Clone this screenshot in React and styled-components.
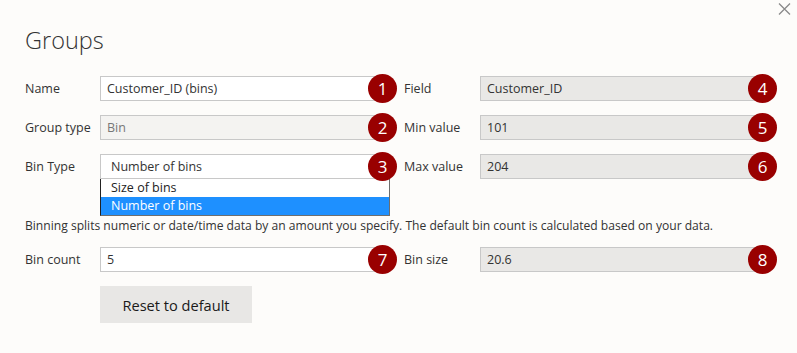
import React from "react";
import styled, { createGlobalStyle } from "styled-components";

const Global = createGlobalStyle`
  html, body { margin: 0; padding: 0; background: #fdfcfa; }
  * { box-sizing: border-box; }
`;

const Dialog = styled.div`
  position: relative;
  width: 797px;
  height: 353px;
  background: #fdfcfa;
  font-family: "Segoe UI", "Open Sans", "Noto Sans", sans-serif;
  color: #333;
  padding: 24px 0 0 25px;
`;

const Close = styled.button`
  position: absolute;
  top: 3px;
  right: 6px;
  width: 13px;
  height: 12px;
  padding: 0;
  border: 0;
  background: transparent;
  display: flex;
`;

const Title = styled.h1`
  margin: 0;
  font-size: 23.5px;
  font-weight: 300;
  line-height: 32px;
  color: #333;
  height: 52px;
`;

const Grid = styled.div`
  display: grid;
  grid-template-columns: 75px 290px 90px 290px;
  grid-auto-rows: 25px;
  row-gap: 14px;
  align-items: center;
`;

const Label = styled.div`
  font-size: 12.5px;
  color: #333;
  padding-left: ${(p) => (p.$right ? "14px" : "0")};
  line-height: 25px;
`;

const InputWrap = styled.div`
  position: relative;
  height: 25px;
`;

const Box = styled.div`
  height: 25px;
  border: 1px solid #c8c8c8;
  background: ${(p) =>
    p.$variant === "light" ? "#f4f3f1" : p.$variant === "grey" ? "#e9e8e6" : "#ffffff"};
  color: ${(p) => (p.$variant === "light" ? "#777" : "#333")};
  font-size: 12.5px;
  line-height: 23px;
  padding-left: ${(p) => (p.$select ? "10px" : "6px")};
  white-space: nowrap;
`;

const Badge = styled.div`
  position: absolute;
  right: -7px;
  top: 50%;
  width: 29px;
  height: 29px;
  margin-top: -15px;
  border-radius: 50%;
  background: #990000;
  color: #fff;
  font-size: 17px;
  line-height: 29px;
  text-align: center;
  z-index: 2;
`;

const List = styled.div`
  position: absolute;
  left: 0;
  top: 25px;
  width: 290px;
  border: 1px solid #6e6e6e;
  border-left-color: #222;
  border-top: 0;
  background: #fff;
  z-index: 1;
`;

const Option = styled.div`
  height: 18px;
  line-height: 18px;
  font-size: 12.5px;
  padding-left: 10px;
  background: ${(p) => (p.$active ? "#1e90ff" : "#fff")};
  color: ${(p) => (p.$active ? "#fff" : "#222")};
`;

const Description = styled.p`
  margin: 0;
  height: 68px;
  padding-top: 39px;
  font-size: 12.1px;
  line-height: 16px;
  color: #333;
  white-space: nowrap;
`;

const SecondGrid = styled(Grid)``;

const Button = styled.button`
  margin: 14px 0 0 75px;
  width: 152px;
  height: 37px;
  border: 0;
  background: #e8e7e5;
  color: #1a1a1a;
  font-family: inherit;
  font-size: 14.6px;
  padding: 0;
`;

function Field({ label, right, value, variant, n, select, children }) {
  return (
    <>
      <Label $right={right}>{label}</Label>
      <InputWrap>
        <Box $variant={variant} $select={select}>{value}</Box>
        <Badge>{n}</Badge>
        {children}
      </InputWrap>
    </>
  );
}

export default function App() {
  return (
    <>
      <Global />
      <Dialog>
        <Close aria-label="Close">
          <svg width="13" height="12" viewBox="0 0 13 12">
            <path d="M1 0.5 L12 11.5 M12 0.5 L1 11.5" stroke="#8a8a8a" strokeWidth="1.3" fill="none" />
          </svg>
        </Close>
        <Title>Groups</Title>
        <Grid>
          <Field label="Name" value="Customer_ID (bins)" n="1" />
          <Field label="Field" right value="Customer_ID" variant="grey" n="4" />
          <Field label="Group type" value="Bin" variant="light" n="2" />
          <Field label="Min value" right value="101" variant="grey" n="5" />
          <Field label="Bin Type" value="Number of bins" n="3" select>
            <List>
              <Option>Size of bins</Option>
              <Option $active>Number of bins</Option>
            </List>
          </Field>
          <Field label="Max value" right value="204" variant="grey" n="6" />
        </Grid>
        <Description>
          Binning splits numeric or date/time data by an amount you specify. The default bin count is calculated based on your data.
        </Description>
        <SecondGrid>
          <Field label="Bin count" value="5" n="7" />
          <Field label="Bin size" right value="20.6" variant="grey" n="8" />
        </SecondGrid>
        <Button>Reset to default</Button>
      </Dialog>
    </>
  );
}
